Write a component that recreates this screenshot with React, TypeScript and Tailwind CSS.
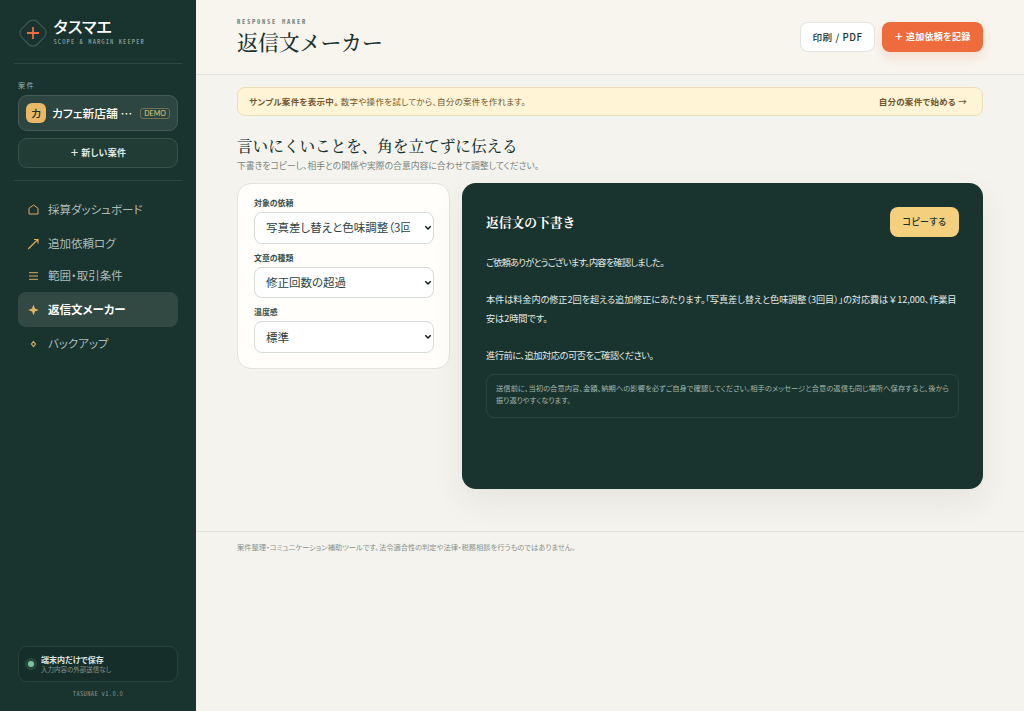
import React from 'react'

const navItems = [
  { label: '採算ダッシュボード', icon: 'home', row: 'h-[34px]' },
  { label: '追加依頼ログ', icon: 'arrow', row: 'h-[34px]' },
  { label: '範囲・取引条件', icon: 'lines', row: 'h-[29px]' },
  { label: '返信文メーカー', icon: 'spark', row: 'h-[35px] mt-[2px]', active: true },
  { label: 'バックアップ', icon: 'diamond', row: 'h-[34px]' },
]

function NavIcon({ name }: { name: string }) {
  return (
    <svg width="12" height="12" viewBox="0 0 12 12" fill="none" stroke="#d9ad5c" strokeWidth="1" className="shrink-0">
      {name === 'home' && <path d="M2 10V4.300L6.500 1 11 4.300V10z" />}
      {name === 'arrow' && <path d="M1.200 11L10.500 1.800M7 1.500h4v4" strokeWidth="1.200" />}
      {name === 'lines' && <path d="M2 2.700h9M2 6h9M2 9.300h9" />}
      {name === 'spark' && <path d="M6.500 .5l1.500 4L11.700 6 8 7.500l-1.500 3.700L5 7.500 1.300 6 5 4.500z" fill="#e2b35f" stroke="none" />}
      {name === 'diamond' && <path d="M6.500 3.500L8.500 6l-2 2.500-2-2.500z" strokeWidth="1.200" />}
    </svg>
  )
}

function Field({ label, value }: { label: string; value: string }) {
  return (
    <label className="block">
      <span className="block h-[10px] text-[7.900px] leading-[10px] font-bold text-[#35504a]">{label}</span>
      <span className="relative mt-1 block">
        <select className="block h-[31.500px] w-full appearance-none overflow-hidden rounded-[8px] border border-[#d6dcda] bg-white pr-[23px] pl-[11px] text-[11.500px] text-[#2c423e]">
          <option>{value}</option>
        </select>
        <svg width="8" height="6" viewBox="0 0 8 6" fill="none" className="pointer-events-none absolute top-[13px] right-[2px]">
          <path d="M1.300 1.300L4 4l2.700-2.700" stroke="#101c19" strokeWidth="1.500" />
        </svg>
      </span>
    </label>
  )
}

export default function App() {
  return (
    <div
      className="flex h-[711px] w-[1024px] overflow-hidden bg-[#f5f3ee] text-[#18332e]"
      style={{ fontFamily: '"Noto Sans CJK JP", sans-serif', fontFeatureSettings: '"palt"' }}
    >
      {/* Sidebar */}
      <aside className="flex w-[196px] shrink-0 flex-col bg-[#19332e] px-[14px]">
        <div className="flex h-16 items-center gap-[5px] border-b border-[#2d4640] pl-[2.500px]">
          <svg width="32" height="32" viewBox="0 0 32 32" fill="none" className="mt-[2px] shrink-0">
            <rect x="5" y="5" width="22" height="22" rx="6" transform="rotate(45 16 16)" stroke="#4b605b" />
            <path d="M16 10v12M10 16h12" stroke="#ed6b3d" strokeWidth="1.800" />
          </svg>
          <div className="whitespace-nowrap">
            <div className="h-[20px] text-[16.300px] leading-[18px] font-medium text-white">タスマエ</div>
            <div className="h-[10px] font-['Noto_Sans_Mono_CJK_JP','Liberation_Mono'] text-[6.500px] leading-[9px] tracking-[1.100px] text-[#9eafa9]">SCOPE &amp; MARGIN KEEPER</div>
          </div>
        </div>

        <div className="border-b border-[#2d4640] px-1 pt-[16px] pb-[12px]">
          <div className="h-[10px] text-[7px] leading-[10px] tracking-[1.500px] text-[#9eafa9]">案件</div>
          <div className="mt-[5px] flex h-9 items-center rounded-[9px] border border-[#465b56] bg-[#2e4641] pr-[7px] pl-[7px]">
            <div className="flex size-5 shrink-0 items-center justify-center rounded-[6px] bg-[#e9b968] text-[11px] font-medium text-[#19332e]">カ</div>
            <div className="ml-[6px] flex-1 text-[11.800px] font-medium whitespace-nowrap text-white">カフェ新店舗 …</div>
            <div className="flex h-[11px] items-center rounded-[3px] border border-[#6f7051] px-[3px] font-['Lato'] text-[7px] tracking-[0.1px] text-[#e2c778]">DEMO</div>
          </div>
          <button className="mt-[7px] block h-[30px] w-full rounded-[9px] border border-[#3a514b] bg-[#213b35] text-[9px] font-bold tracking-[0.200px] text-[#e4ebe7]">＋ 新しい案件</button>
        </div>

        <nav className="px-1 pt-[12px]">
          {navItems.map((item) => (
            <div
              key={item.label}
              className={`flex items-center gap-[9px] rounded-[8px] pl-[9px] text-[11.500px] whitespace-nowrap ${item.row} ${item.active ? 'bg-[#314843] font-bold text-white' : 'text-[#aebcb7]'}`}
            >
              <NavIcon name={item.icon} />
              <span>{item.label}</span>
            </div>
          ))}
        </nav>

        <div className="mt-auto px-1 pb-[12px]">
          <div className="flex h-9 items-center rounded-[9px] border border-[#29413b] bg-[#162e29] pl-[6px]">
            <span className="flex size-3 items-center justify-center rounded-full bg-[#27463b]">
              <span className="size-[6px] rounded-full bg-[#79c5a0]" />
            </span>
            <div className="ml-1 whitespace-nowrap">
              <div className="h-[10px] text-[8px] leading-[10px] font-bold text-[#dce5e0]">端末内だけで保存</div>
              <div className="h-[9px] text-[6.500px] leading-[8px] text-[#82958e]">入力内容の外部送信なし</div>
            </div>
          </div>
          <div className="mt-[7px] h-[10px] text-center font-['Noto_Sans_Mono_CJK_JP','Liberation_Mono'] text-[6.500px] leading-[9px] tracking-[0.350px] text-[#82958e]">TASUNAE v1.0.0</div>
        </div>
      </aside>

      {/* Main */}
      <main className="flex-1">
        <header className="flex h-[75px] justify-between border-b border-[#e2e2dd] bg-[#f8f5ef] pr-[42px] pl-[41px]">
          <div className="pt-[17px]">
            <div className="h-[10px] font-['Noto_Sans_Mono_CJK_JP','Liberation_Mono'] text-[6.500px] leading-[9px] font-bold tracking-[1.750px] text-[#73857e]">RESPONSE MAKER</div>
            <h1 className="h-[30px] font-['Noto_Serif_CJK_JP','Noto_Sans_CJK_JP',serif] text-[20.900px] leading-[29px] font-medium whitespace-nowrap [font-feature-settings:normal]">返信文メーカー</h1>
          </div>
          <div className="flex gap-[7px] pt-[22px] text-[9px] font-bold">
            <button className="h-[30px] w-[75px] rounded-[8px] border border-[#e3e5e1] bg-white text-[9.600px] font-medium tracking-[0.550px]">印刷 / PDF</button>
            <button className="h-[30px] w-[101px] rounded-[8px] bg-[#ed6b3d] tracking-[0.300px] text-white shadow-[0_5px_12px_rgba(237,107,61,0.18)]">＋ 追加依頼を記録</button>
          </div>
        </header>

        <div className="h-[456px] pt-3 pr-[42px] pl-[41px]">
          <div className="flex h-[29px] items-center justify-between rounded-[8px] border border-[#ecdfb5] bg-[#fff4d6] pr-[15px] pl-[11px] text-[8.500px] tracking-[0.270px] text-[#70572b]">
            <p><b>サンプル案件を表示中。</b> 数字や操作を試してから、自分の案件を作れます。</p>
            <b>自分の案件で始める →</b>
          </div>

          <h2 className="mt-[20px] h-5 font-['Noto_Serif_CJK_JP','Noto_Sans_CJK_JP',serif] text-[15.600px] leading-[19px] font-medium [font-feature-settings:normal]">言いにくいことを、角を立てずに伝える</h2>
          <p className="mt-1 h-3 text-[8.800px] leading-3 text-[#788680]">下書きをコピーし、相手との関係や実際の合意内容に合わせて調整してください。</p>

          <div className="mt-[11px] flex items-start gap-3">
            <section className="flex h-[186px] w-[213px] flex-col gap-[9.200px] rounded-[14px] border border-[#e2e4de] bg-[#fffefb] pt-[14px] pr-[15px] pl-4">
              <Field label="対象の依頼" value="写真差し替えと色味調整（3回目）" />
              <Field label="文章の種類" value="修正回数の超過" />
              <Field label="温度感" value="標準" />
            </section>

            <section className="h-[306px] flex-1 rounded-[14px] bg-[#19332e] px-6 pt-6 shadow-[0_12px_32px_rgba(24,51,46,0.08)]">
              <div className="flex items-center justify-between">
                <h3 className="font-['Noto_Serif_CJK_JP','Noto_Sans_CJK_JP',serif] text-[12.750px] leading-[18px] font-bold text-white [font-feature-settings:normal]">返信文の下書き</h3>
                <button className="h-[30px] w-[69px] rounded-[8px] bg-[#f3cf7e] text-[9px] font-medium tracking-[0.400px]">コピーする</button>
              </div>
              <div className="mt-4 text-[9.200px] leading-[18.500px] whitespace-nowrap text-[#e3ebe7]">
                <p className="tracking-[-0.760px]">ご依頼ありがとうございます。内容を確認しました。</p>
                <p className="mt-[18.500px] tracking-[-0.100px]">本件は料金内の修正2回を超える追加修正にあたります。「写真差し替えと色味調整（3回目）」の対応費は<span className="[font-feature-settings:normal]">￥</span>12,000、作業目<br />安は2時間です。</p>
                <p className="mt-[18.500px] tracking-[-0.430px]">進行前に、追加対応の可否をご確認ください。</p>
              </div>
              <div className="mt-[10px] h-[44px] rounded-[8px] border border-[#2b453e] px-[9px] pt-[8px] text-[7.320px] leading-[11.500px] whitespace-nowrap text-[#a2b8ad]">
                送信前に、当初の合意内容、金額、納期への影響を必ずご自身で確認してください。相手のメッセージと合意の返信も同じ場所へ保存すると、後から<br />振り返りやすくなります。
              </div>
            </section>
          </div>
        </div>

        <footer className="border-t border-[#e0e1db] pt-[10px] pl-[41px] text-[7.250px] leading-[11px] text-[#85908a]">
          案件整理・コミュニケーション補助ツールです。法令適合性の判定や法律・税務相談を行うものではありません。
        </footer>
      </main>
    </div>
  )
}
